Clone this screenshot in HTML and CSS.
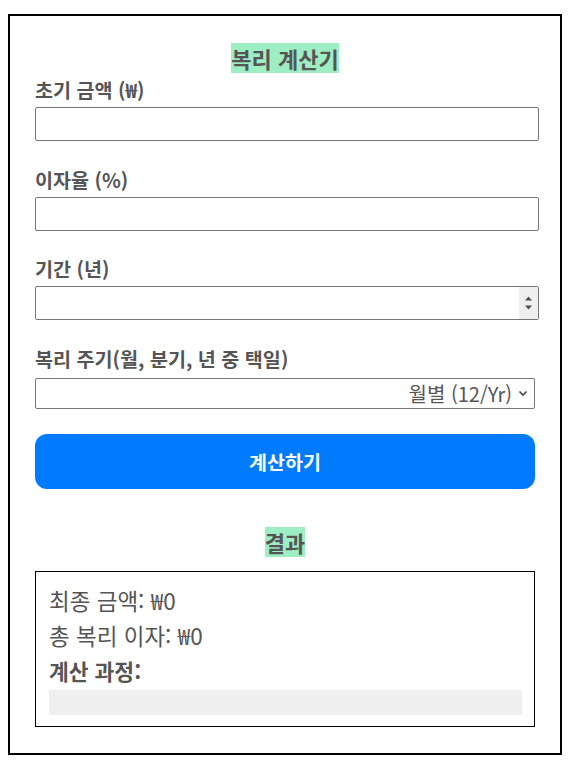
FILE: index.html
```html
<!DOCTYPE html>
<html lang="ko">
<head>
<meta charset="utf-8">
<title>복리 계산기</title>
<link rel="stylesheet" href="styles.css">
</head>
<body>
<div class="calc">
  <h2 class="title"><span class="mark">복리 계산기</span></h2>

  <label class="field-label" for="principal">초기 금액 (₩)</label>
  <input class="field" id="principal" type="text">

  <label class="field-label" for="rate">이자율 (%)</label>
  <input class="field" id="rate" type="text">

  <label class="field-label" for="years">기간 (년)</label>
  <div class="number-wrap">
    <input class="field" id="years" type="text">
    <span class="spinner">
      <svg width="9" height="20" viewBox="0 0 9 20"><path d="M1 7.5 L4.5 3.5 L8 7.5 Z" fill="#505050"/><path d="M1 12.5 L4.5 16.5 L8 12.5 Z" fill="#505050"/></svg>
    </span>
  </div>

  <label class="field-label sel-label" for="freq">복리 주기(월, 분기, 년 중 택일)</label>
  <div class="select-wrap">
    <select class="select" id="freq">
      <option>월별 (12/Yr)</option>
      <option>분기별 (4/Yr)</option>
      <option>연별 (1/Yr)</option>
    </select>
    <svg class="chev" width="10" height="7" viewBox="0 0 10 7"><path d="M1.5 1.5 L5 5 L8.5 1.5" fill="none" stroke="#444" stroke-width="1.6"/></svg>
  </div>

  <button class="btn" type="button">계산하기</button>

  <h2 class="title result-title"><span class="mark">결과</span></h2>

  <div class="result">
    <div class="line">최종 금액: ₩0</div>
    <div class="line">총 복리 이자: ₩0</div>
    <div class="line strong">계산 과정:</div>
    <div class="steps"></div>
  </div>
</div>
</body>
</html>
```

FILE: styles.css
```css
html, body {
  margin: 0;
  padding: 0;
  background: #fff;
}

body {
  font-family: "Noto Sans CJK KR", "Noto Sans", sans-serif;
  color: #555;
}

.calc {
  box-sizing: border-box;
  width: 554px;
  margin: 14px 0 8px 8px;
  border: 2px solid #000;
  padding: 0 25px 26px 25px;
}

.title {
  margin: 27px 0 4px;
  text-align: center;
  font-size: 22px;
  font-weight: 700;
  line-height: 30px;
}

.mark {
  display: inline-block;
  background: #9eeec4;
  color: #555;
}

.field-label {
  display: block;
  font-size: 19.6px;
  font-weight: 700;
  line-height: 26px;
  margin-bottom: 4px;
  color: #555;
}

.field {
  display: block;
  box-sizing: border-box;
  width: calc(100% + 4px);
  height: 34px;
  margin: 0 0 25.5px 0;
  padding: 1px 4px;
  border: 1px solid #767676;
  border-radius: 2px;
  font-family: inherit;
  font-size: 20px;
  background: #fff;
}

.number-wrap {
  position: relative;
}

.spinner {
  position: absolute;
  top: 1px;
  right: -3px;
  width: 19px;
  height: 32px;
  background: #efefef;
  display: flex;
  align-items: center;
  justify-content: center;
}

.sel-label {
  margin-bottom: 6px;
}

.select-wrap {
  position: relative;
}

.select {
  display: block;
  box-sizing: border-box;
  width: 100%;
  height: 31px;
  margin: 0;
  padding: 0 22px 0 4px;
  border: 1px solid #767676;
  border-radius: 2px;
  background: #fff;
  font-family: inherit;
  font-size: 20px;
  color: #555;
  text-align: right;
  text-align-last: right;
  -webkit-appearance: none;
  appearance: none;
}

.chev {
  position: absolute;
  right: 7px;
  top: 12px;
  pointer-events: none;
}

.btn {
  display: block;
  width: 100%;
  height: 55px;
  margin: 25px 0 0;
  border: none;
  border-radius: 12px;
  background: #007bff;
  color: #fff;
  font-family: inherit;
  font-size: 19.5px;
  font-weight: 700;
}

.result-title {
  margin: 38px 0 14px;
}

.result {
  border: 1px solid #000;
  padding: 11px 12px 11px 13px;
}

.line {
  font-size: 22.5px;
  line-height: 35px;
  color: #555;
}

.line.strong {
  font-weight: 700;
  font-size: 21.5px;
}

.steps {
  margin-top: 2px;
  height: 25px;
  background: #efefef;
}
```
